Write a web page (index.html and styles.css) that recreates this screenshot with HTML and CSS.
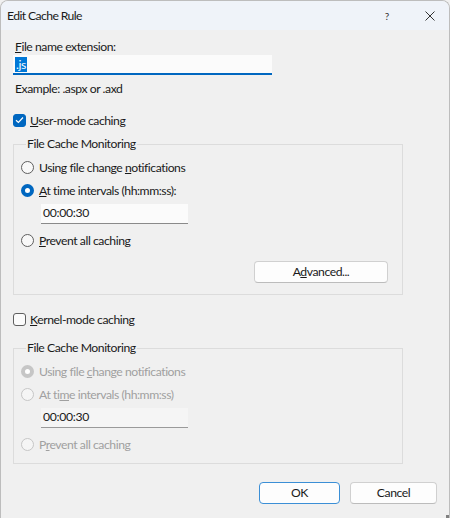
FILE: index.html
```html
<!DOCTYPE html>
<html>
<head>
<meta charset="utf-8">
<link rel="stylesheet" href="styles.css">
</head>
<body>
<div class="window">
  <div class="titlebar">
    <span class="title">Edit Cache Rule</span>
    <span class="tb-help">?</span>
    <span class="tb-close">
      <svg width="10" height="10" viewBox="0 0 10 10"><path d="M0.5 0.5 L9.5 9.5 M9.5 0.5 L0.5 9.5" stroke="#333" stroke-width="1" fill="none"/></svg>
    </span>
  </div>
  <div class="content">
    <div class="label"><u>F</u>ile name extension:</div>
    <div class="textbox ext"><span class="sel">.js</span></div>
    <div class="hint">Example: .aspx or .axd</div>

    <div class="check-row user">
      <span class="checkbox checked">
        <svg width="9" height="8" viewBox="0 0 9 8"><path d="M1 4.2 L3.4 6.5 L8 1.5" stroke="#fff" stroke-width="1.2" fill="none"/></svg>
      </span>
      <span><u>U</u>ser-mode caching</span>
    </div>

    <fieldset class="group g1">
      <legend>File Cache Monitoring</legend>
      <div class="radio-row"><span class="radio"></span><span>Using file change <u>n</u>otifications</span></div>
      <div class="radio-row"><span class="radio on"></span><span><u>A</u>t time intervals (hh:mm:ss):</span></div>
      <div class="textbox time">00:00:30</div>
      <div class="radio-row"><span class="radio"></span><span><u>P</u>revent all caching</span></div>
      <div class="btn-row"><button class="btn adv">A<u>d</u>vanced...</button></div>
    </fieldset>

    <div class="check-row kernel">
      <span class="checkbox"></span>
      <span><u>K</u>ernel-mode caching</span>
    </div>

    <fieldset class="group g2">
      <legend>File Cache Monitoring</legend>
      <div class="radio-row dis"><span class="radio dis-on"></span><span>Using file <u>c</u>hange notifications</span></div>
      <div class="radio-row dis"><span class="radio dis"></span><span>At ti<u>m</u>e intervals (hh:mm:ss)</span></div>
      <div class="textbox time disabled">00:00:30</div>
      <div class="radio-row dis"><span class="radio dis"></span><span>P<u>r</u>event all caching</span></div>
    </fieldset>

    <div class="footer">
      <button class="btn ok">OK</button>
      <button class="btn cancel">Cancel</button>
    </div>
  </div>
  <span class="grip"></span>
</div>
</body>
</html>
```

FILE: styles.css
```css
* { box-sizing: border-box; }
html, body { margin: 0; padding: 0; background: #f0f0f0; }
body {
  font-family: Lato, "Noto Sans", sans-serif;
  font-size: 12.2px;
  letter-spacing: -0.45px;
  color: #1a1a1a;
}
u { text-decoration: underline; text-underline-offset: 1px; text-decoration-thickness: 1px; }

.window {
  position: relative;
  width: 450px;
  height: 518px;
  border: 1px solid #bdbdbd;
  border-bottom: none;
  border-radius: 8px 8px 0 0;
  background: #f0f0f0;
  overflow: hidden;
  display: flex;
  flex-direction: column;
}
.titlebar {
  height: 29px;
  flex: none;
  background: #eff3f9;
  display: flex;
  align-items: center;
  padding-left: 6px;
}
.title { flex: 1; font-size: 12.2px; letter-spacing: -0.6px; color: #1a1a1a; }
.tb-help { width: 10px; font-size: 10px; letter-spacing: 0; color: #333; margin-right: 33px; text-align: center; }
.tb-close { width: 10px; height: 10px; display: flex; margin-right: 14px; }

.content {
  flex: 1;
  padding: 9px 12px 0 12px;
  display: flex;
  flex-direction: column;
}
.label { line-height: 16px; padding-left: 2px; }
.textbox {
  background: #fbfbfb;
  border-bottom: 1px solid #8a8a8a;
  height: 20px;
  line-height: 18px;
  padding-left: 2px;
}
.ext {
  width: 259px;
  border-bottom: 2px solid #0067c0;
  display: flex;
  align-items: center;
}
.sel { background: #0078d7; color: #fff; padding: 0 1px; line-height: 15px; }
.hint { margin-top: 6px; line-height: 16px; padding-left: 2px; }

.check-row { display: flex; align-items: center; height: 16px; }
.check-row.user { margin-top: 15px; }
.check-row.kernel { margin-top: 16px; }
.check-row > span:last-child { margin-left: 4px; }
.checkbox {
  width: 13px; height: 13px;
  border: 1px solid #5f5f5f;
  border-radius: 3px;
  background: #fbfbfb;
  display: flex; align-items: center; justify-content: center;
}
.checkbox.checked { background: #0067c0; border-color: #0067c0; }

.group {
  margin: 0;
  border: 1px solid #dcdcdc;
  border-radius: 0;
  width: 390px;
  padding: 0 14px 0 7px;
  display: flex;
  flex-direction: column;
}
.group legend { padding: 0 1px; margin-left: 5px; line-height: 16px; }
.g1 { margin-top: 8px; height: 159px; }
.g2 { margin-top: 13px; height: 124px; }

.radio-row { display: flex; align-items: center; height: 16px; margin-top: 7px; }
.radio-row > span:last-child { margin-left: 5px; }
.radio {
  width: 13px; height: 13px;
  border-radius: 50%;
  border: 1px solid #5f5f5f;
  background: #f8f8f8;
  flex: none;
}
.radio.on { border: 4px solid #0067c0; background: #fff; }
.radio.dis { border-color: #c6c6c6; background: #f5f5f5; }
.radio.dis-on { border: 4px solid #c6c6c6; background: #fff; }
.radio-row.dis { color: #a0a0a0; }

.time { width: 147px; margin-left: 20px; margin-top: 6px; padding-left: 2px; letter-spacing: -0.3px; }
.time + .radio-row { margin-top: 8px; }
.textbox.disabled { background: #f5f5f5; border-bottom-color: #9a9a9a; }

.btn-row { display: flex; justify-content: flex-end; margin-top: 13px; }
.btn {
  font-family: inherit;
  font-size: 12.2px;
  letter-spacing: -0.45px;
  color: #1a1a1a;
  background: #fdfdfd;
  border: 1px solid #d0d0d0;
  border-bottom-color: #bcbcbc;
  border-radius: 4px;
  height: 22px;
  padding: 0;
  line-height: 18px;
}
.adv { width: 134px; }

.footer {
  display: flex;
  justify-content: flex-end;
  gap: 10px;
  margin-top: 18px;
}
.ok { width: 81px; border-color: #3b8fd6; }
.cancel { width: 87px; }

.grip {
  position: absolute;
  right: 0; bottom: 0;
  width: 3px; height: 3px;
  background: #808080;
}
```
